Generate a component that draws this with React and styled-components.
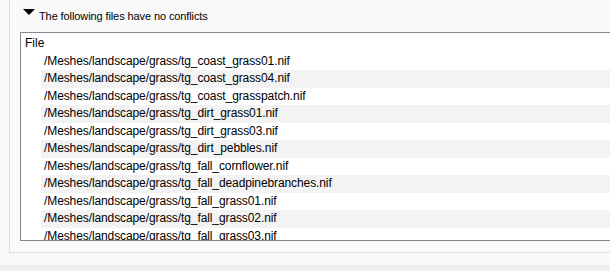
import React from 'react';
import styled, { createGlobalStyle } from 'styled-components';

const files = [
  'tg_coast_grass01.nif',
  'tg_coast_grass04.nif',
  'tg_coast_grasspatch.nif',
  'tg_dirt_grass01.nif',
  'tg_dirt_grass03.nif',
  'tg_dirt_pebbles.nif',
  'tg_fall_cornflower.nif',
  'tg_fall_deadpinebranches.nif',
  'tg_fall_grass01.nif',
  'tg_fall_grass02.nif',
  'tg_fall_grass03.nif'
];

const GlobalStyle = createGlobalStyle`
  html, body {
    margin: 0;
    padding: 0;
    background: #f0f0f0;
    font-family: "Liberation Sans", Arial, sans-serif;
    font-size: 12px;
    color: #000;
  }
`;

const App = () => (
  <>
    <GlobalStyle />
    <Page>
      <Top>
        <Panel>
          <Header>
            <Arrow viewBox="0 0 12 6" width="12" height="6">
              <path d="M0 0 L12 0 L6 6 Z" fill="#000" />
            </Arrow>
            <HeaderText>The following files have no conflicts</HeaderText>
          </Header>
          <ListBox>
            <ColumnHead>File</ColumnHead>
            {files.map((file, idx) => (
              <Row key={file} $striped={idx % 2 === 1}>
                /Meshes/landscape/grass/{file}
              </Row>
            ))}
          </ListBox>
        </Panel>
      </Top>
      <Gap />
      <Footer />
    </Page>
  </>
);

const Page = styled.div`
  width: 610px;
  height: 271px;
  overflow: hidden;
  display: flex;
  flex-direction: column;
`;

const Top = styled.div`
  background: #f9f9f9;
  padding-left: 9px;
`;

const Panel = styled.div`
  height: 252px;
  border-left: 1px solid #dcdcdc;
  border-bottom: 1px solid #dcdcdc;
  display: flex;
  flex-direction: column;
`;

const Header = styled.div`
  height: 32px;
  display: flex;
  align-items: flex-start;
  padding: 9px 0 0 13px;
  box-sizing: border-box;
`;

const Arrow = styled.svg`
  display: block;
  flex-shrink: 0;
  margin-right: 4px;
`;

const HeaderText = styled.span`
  font-size: 11px;
  letter-spacing: -0.1px;
  line-height: 14px;
  white-space: nowrap;
`;

const ListBox = styled.div`
  margin-left: 10px;
  height: 207px;
  border: 1px solid #828790;
  border-right: none;
  background: #fff;
  overflow: hidden;
`;

const ColumnHead = styled.div`
  height: 19.5px;
  line-height: 20px;
  padding-left: 4px;
`;

const Row = styled.div`
  height: 17.5px;
  line-height: 17.5px;
  margin-left: 20px;
  padding-left: 3px;
  letter-spacing: -0.1px;
  white-space: nowrap;
  background: ${({ $striped }) => ($striped ? '#f3f3f3' : '#fff')};
`;

const Gap = styled.div`
  height: 12px;
  background: #f9f9f9;
`;

const Footer = styled.div`
  flex: 1;
  background: #f0f0f0;
  border-top: 1px solid #ececec;
`;

export default App;
